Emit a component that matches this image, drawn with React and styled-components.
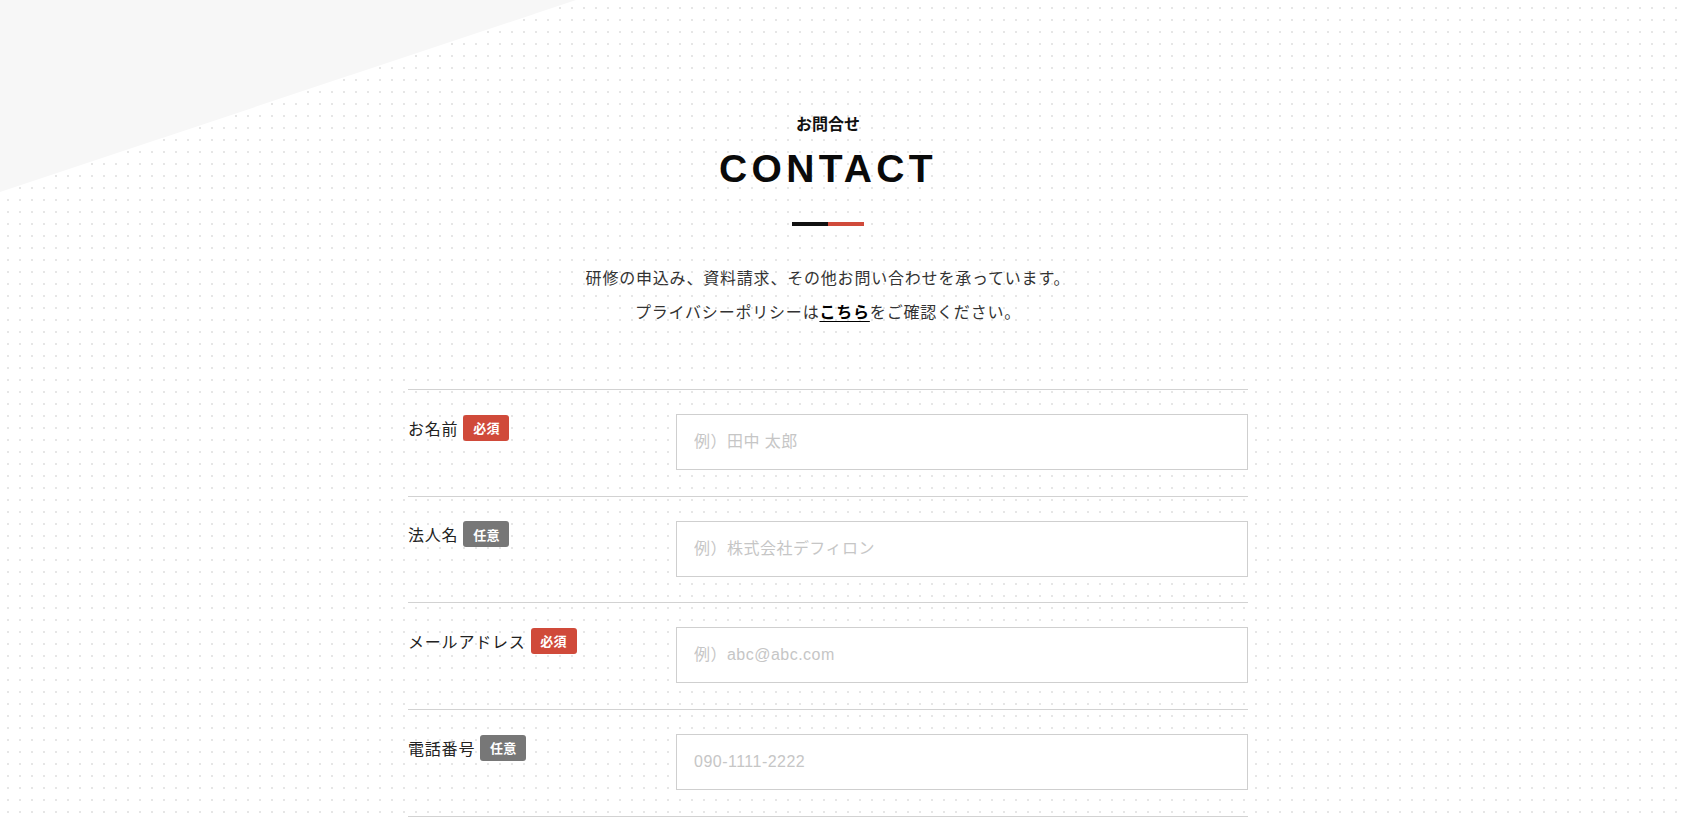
import React from 'react'
import styled, { createGlobalStyle } from 'styled-components'

const GlobalStyle = createGlobalStyle`
    html, body {
        margin: 0;
        padding: 0;
        background: #fff;
    }

    body {
        font-family: 'Liberation Sans', 'Noto Sans CJK JP', sans-serif;
        color: #333;
    }
`

const Page = styled.section`
    position: relative;
    min-height: 100vh;
    padding: 111px 27px 0 0;
    box-sizing: border-box;
    overflow: hidden;
    background-color: #fff;
    background-image: radial-gradient(circle, #e6e6e6 1px, transparent 1.2px);
    background-size: 12px 12px;
    background-position: 2px 2px;

    &::before {
        content: '';
        position: absolute;
        top: 0;
        left: 0;
        width: 576px;
        height: 192px;
        background: #f7f7f7;
        clip-path: polygon(0 0, 100% 0, 0 100%);
    }
`

const Inner = styled.div`
    position: relative;
    width: 840px;
    margin: 0 auto;
`

const Heading = styled.header`
    display: flex;
    flex-direction: column;
    align-items: center;
`

const SubTitle = styled.p`
    margin: 0;
    font-family: 'Noto Sans CJK JP', sans-serif;
    font-size: 16px;
    line-height: 24px;
    font-weight: 700;
    color: #111;
`

const Title = styled.h1`
    margin: 10px 0 0;
    font-family: 'Liberation Sans', sans-serif;
    font-size: 39px;
    line-height: 48px;
    font-weight: 700;
    letter-spacing: 0.11em;
    color: #0a0a0a;
`

const Bar = styled.div`
    display: flex;
    margin-top: 29px;

    span {
        width: 36px;
        height: 4px;
        background: #111;
    }

    span + span {
        background: #d04a3a;
    }
`

const Lead = styled.p`
    margin: 34px 0 0;
    font-family: 'Noto Sans CJK JP', sans-serif;
    font-size: 16px;
    line-height: 34px;
    letter-spacing: 0.05em;
    text-align: center;
    color: #333;

    a {
        color: #000;
        font-weight: 700;
        text-decoration: underline;
        text-underline-offset: 3px;
    }
`

const Form = styled.form`
    margin-top: 61px;
    border-bottom: 1px solid #d2d2d2;
`

const Row = styled.div`
    display: grid;
    grid-template-columns: 268px 1fr;
    padding: 24px 0 25.7px;
    border-top: 1px solid #d2d2d2;
`

const Label = styled.label`
    display: flex;
    align-items: center;
    gap: 5px;
    height: 27px;
    font-family: 'Noto Sans CJK JP', sans-serif;
    font-size: 16px;
    letter-spacing: 0.05em;
    color: #222;
`

const Badge = styled.span`
    display: inline-flex;
    align-items: center;
    justify-content: center;
    width: 46px;
    height: 26px;
    border-radius: 3px;
    background: ${p => (p.$required ? '#d04a3a' : '#777')};
    color: #fff;
    font-family: 'Noto Sans CJK JP', sans-serif;
    font-size: 13px;
    font-weight: 700;
    letter-spacing: 0.02em;
`

const Input = styled.input`
    box-sizing: border-box;
    width: 100%;
    height: 56px;
    padding: 0 17px;
    border: 1px solid #cfcfcf;
    border-radius: 0;
    background: #fff;
    font-family: 'Liberation Sans', 'Noto Sans CJK JP', sans-serif;
    font-size: 16px;
    letter-spacing: 0.03em;
    color: #333;
    outline: none;

    &::placeholder {
        color: #c6c6c6;
    }
`

const fields = [
    { label: 'お名前', required: true, placeholder: '例）田中 太郎', type: 'text' },
    { label: '法人名', required: false, placeholder: '例）株式会社デフィロン', type: 'text' },
    { label: 'メールアドレス', required: true, placeholder: '例）abc@abc.com', type: 'email' },
    { label: '電話番号', required: false, placeholder: '090-1111-2222', type: 'tel' },
]

const App = () => {
    return (
        <>
            <GlobalStyle />
            <Page>
                <Inner>
                    <Heading>
                        <SubTitle>お問合せ</SubTitle>
                        <Title>CONTACT</Title>
                        <Bar><span /><span /></Bar>
                    </Heading>
                    <Lead>
                        研修の申込み、資料請求、その他お問い合わせを承っています。<br />
                        プライバシーポリシーは<a href="#privacy">こちら</a>をご確認ください。
                    </Lead>
                    <Form onSubmit={e => e.preventDefault()}>
                        {fields.map(f => (
                            <Row key={f.label}>
                                <Label>
                                    {f.label}
                                    <Badge $required={f.required}>{f.required ? '必須' : '任意'}</Badge>
                                </Label>
                                <Input type={f.type} placeholder={f.placeholder} />
                            </Row>
                        ))}
                    </Form>
                </Inner>
            </Page>
        </>
    )
}

export default App
